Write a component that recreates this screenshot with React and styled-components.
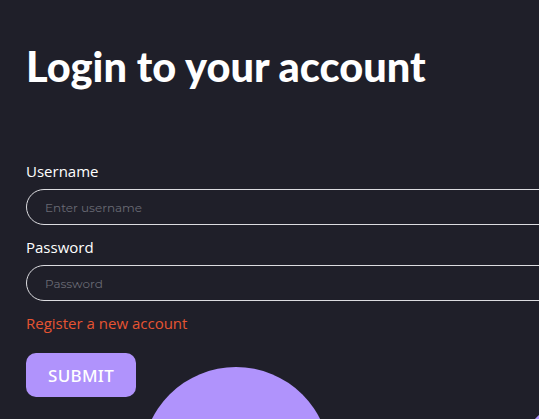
import React from "react";
import styled, { createGlobalStyle } from "styled-components";

const Global = createGlobalStyle`
  html, body { margin: 0; padding: 0; background: #1f1f29; overflow: hidden; }
  body { width: 539px; height: 419px; }
`;

const Page = styled.div`
  position: relative;
  width: 539px;
  height: 419px;
  overflow: hidden;
  background: #1f1f29;
  font-family: "Open Sans", "Noto Sans", sans-serif;
`;

const Content = styled.div`
  position: relative;
  z-index: 1;
  padding: 40px 0 0 26px;
  display: flex;
  flex-direction: column;
`;

const Title = styled.h1`
  margin: 0;
  font-family: "Lato", sans-serif;
  font-weight: 900;
  font-size: 41.5px;
  line-height: 52px;
  color: #ffffff;
`;

const Form = styled.form`
  margin-top: 69px;
  display: flex;
  flex-direction: column;
`;

const Label = styled.label`
  font-family: "Open Sans", sans-serif;
  font-size: 15px;
  line-height: 20px;
  color: #ffffff;
  margin-bottom: 8px;
`;

const Input = styled.input`
  box-sizing: border-box;
  width: 640px;
  height: 36px;
  border: 1px solid #dcdce0;
  border-radius: 18px;
  background: transparent;
  padding: 0 18px;
  margin-bottom: ${(p) => p.$mb || 0}px;
  font-family: "Montserrat", "Noto Sans", sans-serif;
  font-size: 12px;
  color: #fff;
  outline: none;
  &::placeholder { color: #696a74; }
`;

const Link = styled.a`
  margin-top: 12px;
  font-family: "Open Sans", sans-serif;
  font-size: 15px;
  line-height: 20px;
  color: #e65432;
  text-decoration: none;
`;

const Submit = styled.button`
  margin-top: 20px;
  width: 110px;
  height: 44px;
  border: none;
  border-radius: 10px;
  background: #b093fc;
  color: #ffffff;
  font-family: "Noto Sans", sans-serif;
  font-weight: 500;
  font-size: 17px;
  letter-spacing: 0.3px;
`;

const Blob = styled.div`
  position: absolute;
  border-radius: 50%;
  background: #b093fc;
  left: ${(p) => p.$x}px;
  top: ${(p) => p.$y}px;
  width: ${(p) => p.$r * 2}px;
  height: ${(p) => p.$r * 2}px;
`;

export default function App() {
  return (
    <Page>
      <Global />
      <Blob $x={142} $y={367} $r={94} />
      <Blob $x={510} $y={390} $r={92} />
      <Content>
        <Title>Login to your account</Title>
        <Form onSubmit={(e) => e.preventDefault()}>
          <Label>Username</Label>
          <Input placeholder="Enter username" $mb={12} />
          <Label>Password</Label>
          <Input type="password" placeholder="Password" />
          <Link href="#">Register a new account</Link>
          <Submit type="submit">SUBMIT</Submit>
        </Form>
      </Content>
    </Page>
  );
}
